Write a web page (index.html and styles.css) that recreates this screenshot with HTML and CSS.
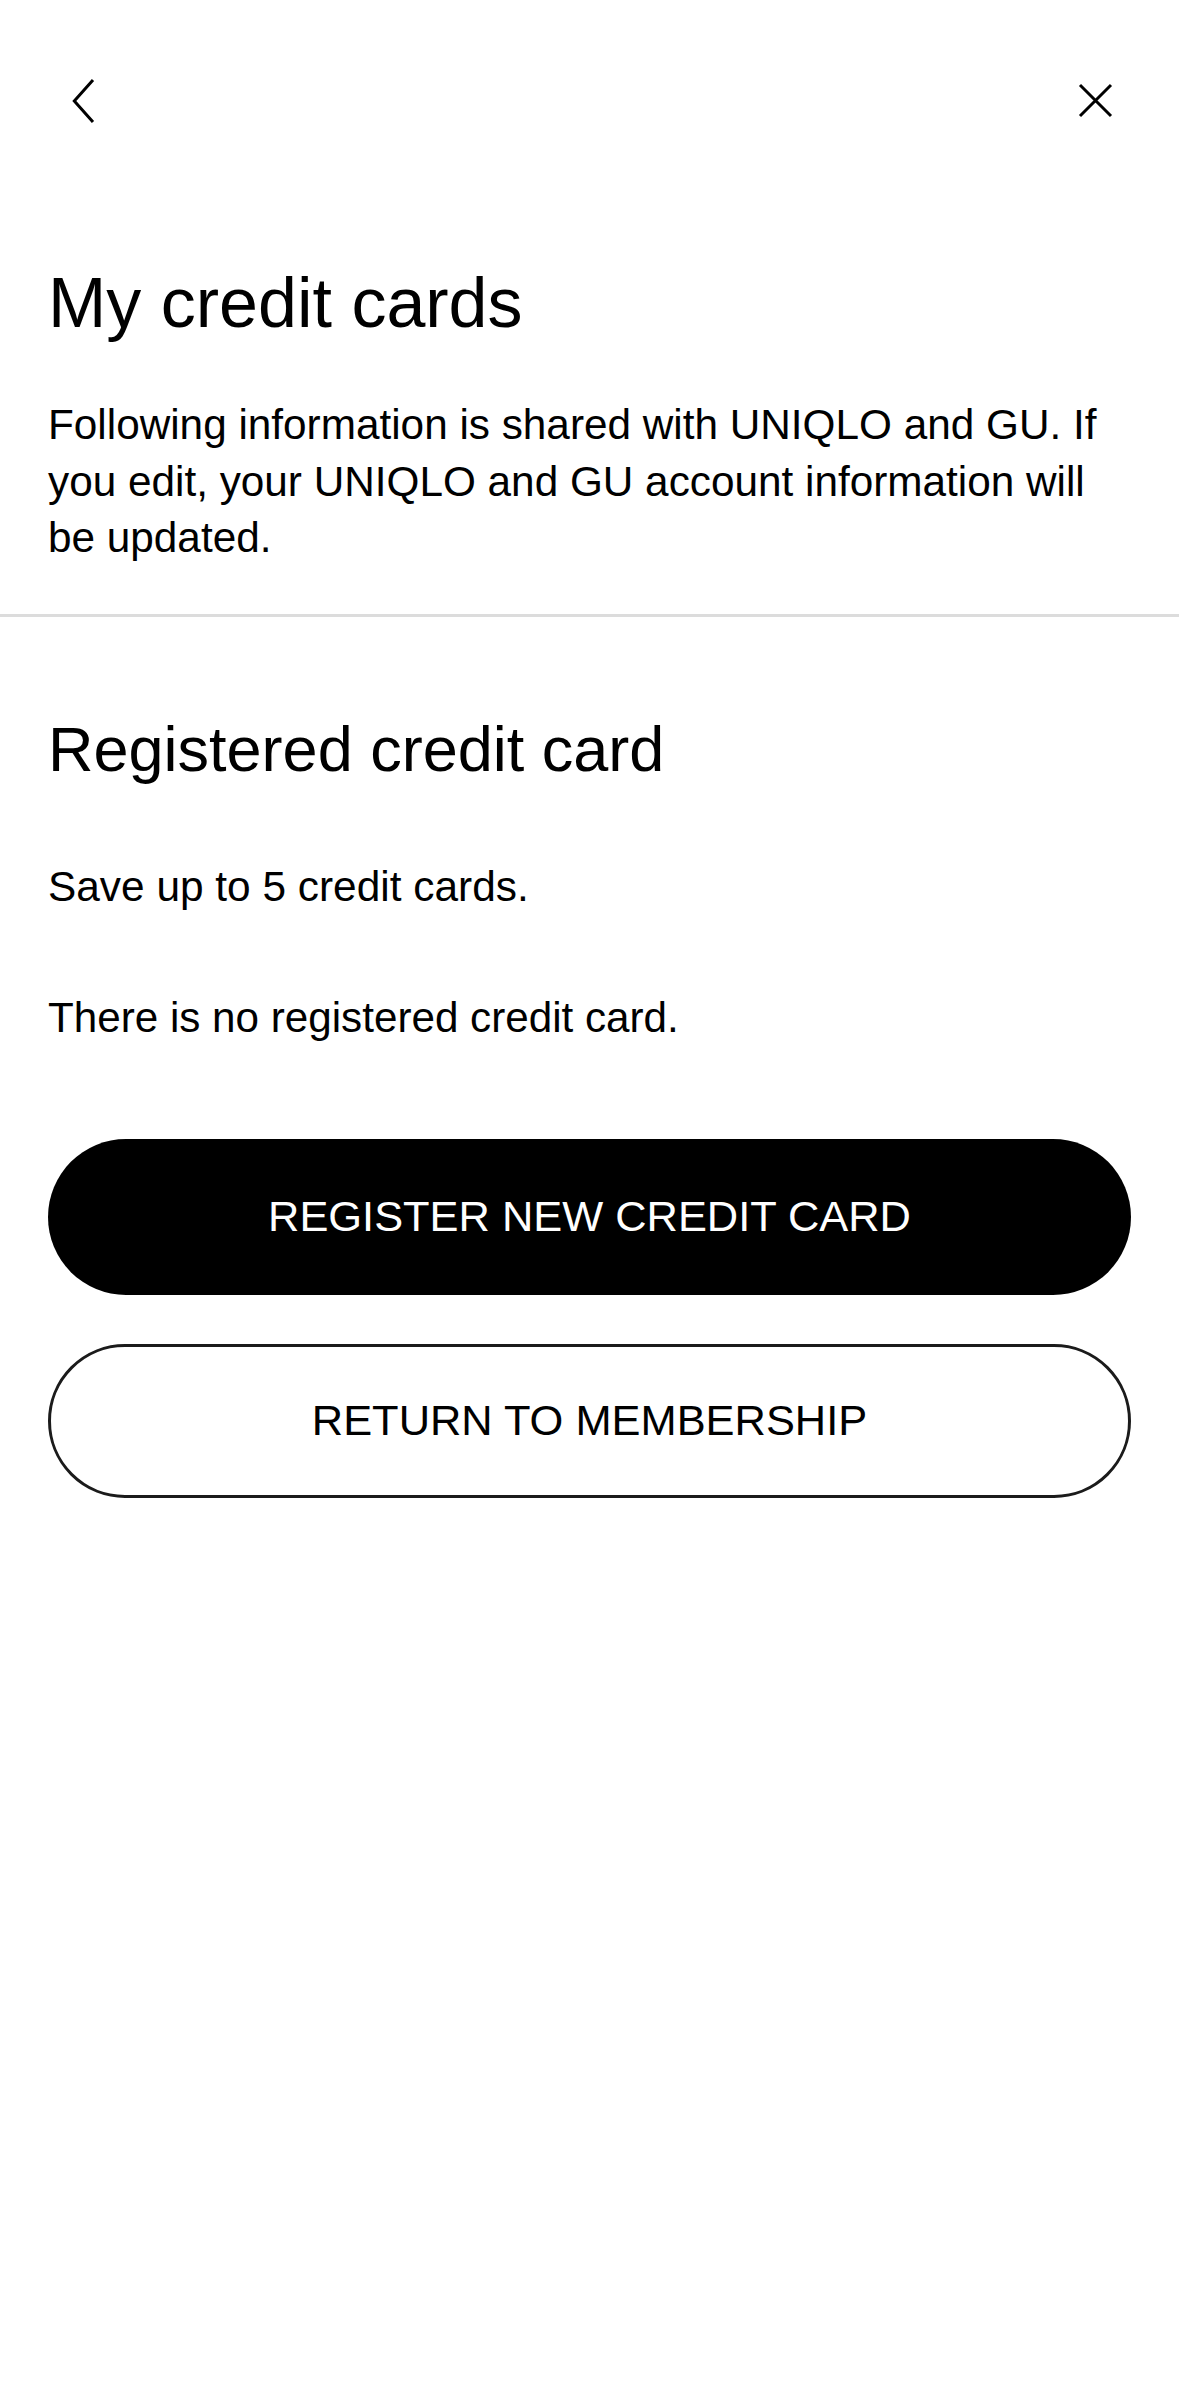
FILE: index.html
```html
<!DOCTYPE html>
<html lang="en">
<head>
<meta charset="utf-8">
<title>My credit cards</title>
<link rel="stylesheet" href="styles.css">
</head>
<body>
<div class="page">
  <header class="topbar">
    <button class="icon-btn" aria-label="Back">
      <svg viewBox="0 0 44 44" width="44" height="44"><path d="M31 1 L12.3 22 L31 43" fill="none" stroke="#000" stroke-width="3"/></svg>
    </button>
    <button class="icon-btn" aria-label="Close">
      <svg viewBox="0 0 44 44" width="44" height="44"><path d="M6 6 L37 37 M37 6 L6 37" fill="none" stroke="#000" stroke-width="3"/></svg>
    </button>
  </header>

  <section class="intro">
    <h1 class="title">My credit cards</h1>
    <p class="lead">Following information is shared with UNIQLO and GU. If you edit, your UNIQLO and GU account information will be updated.</p>
  </section>

  <hr class="divider">

  <section class="cards">
    <h2 class="subtitle">Registered credit card</h2>
    <p class="note">Save up to 5 credit cards.</p>
    <p class="empty">There is no registered credit card.</p>
    <div class="actions">
      <button class="btn btn-primary">REGISTER NEW CREDIT CARD</button>
      <button class="btn btn-outline">RETURN TO MEMBERSHIP</button>
    </div>
  </section>
</div>
</body>
</html>
```

FILE: styles.css
```css
html, body {
  margin: 0;
  padding: 0;
  background: #fff;
}

body {
  font-family: "Liberation Sans", Arial, Helvetica, sans-serif;
  color: #000;
}

.page {
  width: 1179px;
  min-height: 2396px;
  background: #fff;
}

.topbar {
  height: 202px;
  display: flex;
  align-items: center;
  justify-content: space-between;
  padding: 0 61px 0 62px;
  box-sizing: border-box;
}

.icon-btn {
  width: 44px;
  height: 44px;
  padding: 0;
  margin: 0;
  border: 0;
  background: none;
  display: block;
}

.icon-btn svg {
  display: block;
}

.intro {
  padding: 61px 48px 47px;
}

.title {
  margin: 0;
  font-size: 70px;
  line-height: 80px;
  font-weight: 400;
}

.lead {
  margin: 54px 0 0;
  font-size: 42.3px;
  line-height: 56.5px;
}

.divider {
  margin: 0;
  border: 0;
  height: 3px;
  background: #dcdcdc;
}

.cards {
  padding: 96px 48px 0;
}

.subtitle {
  margin: 0;
  font-size: 63px;
  line-height: 72px;
  font-weight: 400;
}

.note {
  margin: 74px 0 0;
  font-size: 42.4px;
  line-height: 56px;
}

.empty {
  margin: 75px 0 0;
  font-size: 42.2px;
  line-height: 56px;
}

.actions {
  margin-top: 93px;
  display: flex;
  flex-direction: column;
  gap: 49px;
}

.btn {
  height: 156px;
  border-radius: 78px;
  font-family: "Liberation Sans", Arial, Helvetica, sans-serif;
  font-size: 43.4px;
  font-weight: 400;
  display: flex;
  align-items: center;
  justify-content: center;
  box-sizing: border-box;
  width: 100%;
  padding: 0;
  cursor: pointer;
}

.btn-primary {
  background: #000;
  color: #fff;
  border: 0;
}

.btn-outline {
  background: #fff;
  color: #000;
  border: 3px solid #1b1b1b;
  height: 154px;
}
```
